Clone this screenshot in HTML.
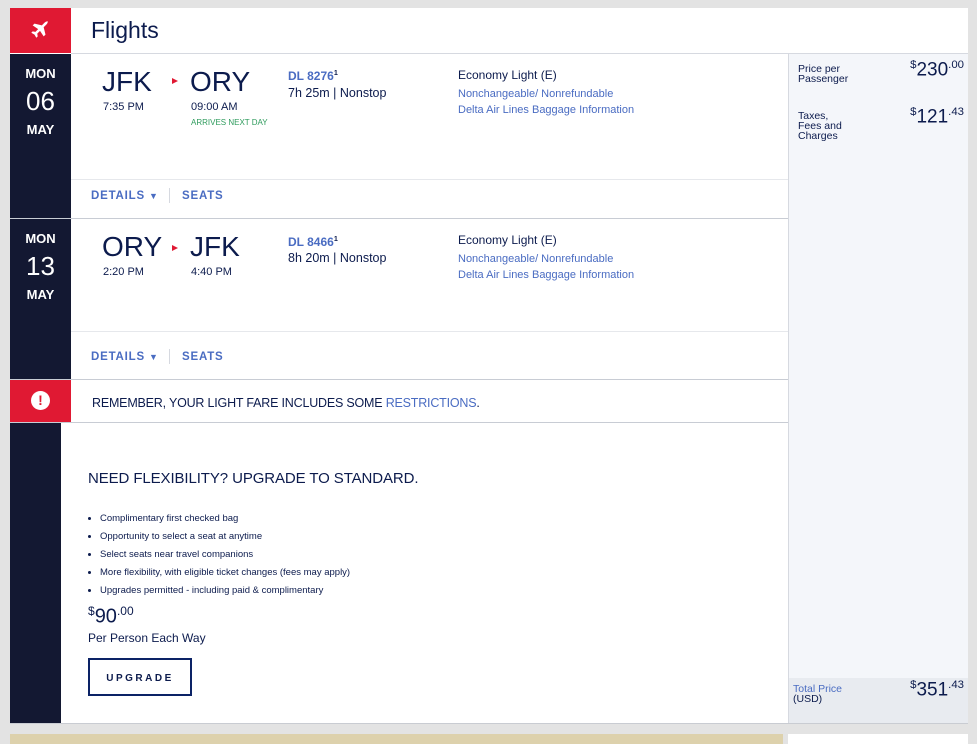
<!DOCTYPE html>
<html><head><meta charset="utf-8"><style>
*{margin:0;padding:0;box-sizing:border-box}
body{width:977px;height:741px;background:#e3e3e3;font-family:"Liberation Sans",sans-serif;color:#0c1b4d;position:relative;overflow:hidden}
.a{position:absolute}
.navy{background:#131832}
.red{background:#e01933}
.w{color:#fff;font-weight:bold;text-align:center}
.code{font-size:28px;letter-spacing:0px}
.t{font-size:11px}
.lnk{color:#4a6cc2}
.b{font-weight:bold}
.hr{height:1px;background:#d6d9e0}
.det{font-size:11.5px;font-weight:bold;color:#4a6cc2;letter-spacing:.8px;line-height:14px}
li{font-size:9.5px;margin-bottom:7px;margin-left:12px}
sup{font-size:60%}
</style></head><body>
<div class="a" style="left:10px;top:8px;width:958px;height:715px;background:#fff;box-shadow:0 1px 0 #c9ccd2"></div>
<div class="a red" style="left:10px;top:8px;width:61px;height:45px"></div>
<svg class="a" style="left:29px;top:19px" width="22" height="22" viewBox="0 0 24 24"><path fill="#fff" d="M21 3c-1-1-3 0-4 1l-3 3-8-2-2 2 6 4-3 3-3-.5-1.5 1.5 3.5 2 2 3.5 1.5-1.5-.5-3 3-3 4 6 2-2-2-8 3-3c1-1 2-3 1-4z"/></svg>
<div class="a" style="left:91px;top:17px;font-size:23px;color:#0c1b4d">Flights</div>
<div class="a hr" style="left:71px;top:53px;width:897px"></div>
<div class="a" style="left:788px;top:54px;width:180px;height:669px;background:#f4f6fa;border-left:1px solid #d6d9e0"></div>
<div class="a" style="left:788px;top:678px;width:180px;height:45px;background:#e8ebf0;border-left:1px solid #d6d9e0"></div>
<div class="a" style="left:798px;top:64px;font-size:10.5px;line-height:10px">Price per<br>Passenger</div>
<div class="a" style="right:13px;top:59px;font-size:19px"><sup>$</sup>230<sup>.00</sup></div>
<div class="a" style="left:798px;top:111px;font-size:10.5px;line-height:10px">Taxes,<br>Fees and<br>Charges</div>
<div class="a" style="right:13px;top:106px;font-size:19px"><sup>$</sup>121<sup>.43</sup></div>
<div class="a" style="left:793px;top:684px;font-size:10.5px;line-height:10px"><span class="lnk">Total Price</span><br>(USD)</div>
<div class="a" style="right:13px;top:679px;font-size:19px"><sup>$</sup>351<sup>.43</sup></div>
<div class="a navy" style="left:10px;top:54px;width:61px;height:325px"></div>
<div class="a w" style="left:10px;top:66px;width:61px;font-size:13px">MON</div>
<div class="a w" style="left:10px;top:86px;width:61px;font-size:26px;font-weight:normal">06</div>
<div class="a w" style="left:10px;top:122px;width:61px;font-size:13px">MAY</div>
<div class="a code" style="left:102px;top:66px">JFK</div>
<div class="a t" style="left:103px;top:101px">7:35 PM</div>
<div class="a" style="left:172px;top:78px;width:0;height:0;border-left:6px solid #e01933;border-top:3px solid transparent;border-bottom:3px solid transparent"></div>
<div class="a code" style="left:190px;top:66px">ORY</div>
<div class="a t" style="left:191px;top:101px">09:00 AM</div>
<div class="a" style="left:191px;top:118px;font-size:8px;color:#2e9b5c">ARRIVES NEXT DAY</div>
<div class="a b lnk" style="left:288px;top:68px;font-size:12px">DL 8276<sup style="color:#0c1b4d">1</sup></div>
<div class="a" style="left:288px;top:86px;font-size:12.5px">7h 25m | Nonstop</div>
<div class="a" style="left:458px;top:68px;font-size:12px">Economy Light (E)</div>
<div class="a lnk" style="left:458px;top:88px;font-size:11px">Nonchangeable/ Nonrefundable</div>
<div class="a lnk" style="left:458px;top:104px;font-size:11px">Delta Air Lines Baggage Information</div>
<div class="a hr" style="left:71px;top:179px;width:717px;background:#e6e8ec"></div>
<div class="a det" style="left:91px;top:189px">DETAILS <span style="font-size:9px">&#9660;</span></div>
<div class="a" style="left:169px;top:188px;width:1px;height:15px;background:#d6d9e0"></div>
<div class="a det" style="left:182px;top:189px">SEATS</div>
<div class="a hr" style="left:10px;top:218px;width:778px;background:#c8ccd4"></div>
<div class="a w" style="left:10px;top:231px;width:61px;font-size:13px">MON</div>
<div class="a w" style="left:10px;top:251px;width:61px;font-size:26px;font-weight:normal">13</div>
<div class="a w" style="left:10px;top:287px;width:61px;font-size:13px">MAY</div>
<div class="a code" style="left:102px;top:231px">ORY</div>
<div class="a t" style="left:103px;top:266px">2:20 PM</div>
<div class="a" style="left:172px;top:245px;width:0;height:0;border-left:6px solid #e01933;border-top:3px solid transparent;border-bottom:3px solid transparent"></div>
<div class="a code" style="left:190px;top:231px">JFK</div>
<div class="a t" style="left:191px;top:266px">4:40 PM</div>
<div class="a b lnk" style="left:288px;top:234px;font-size:12px">DL 8466<sup style="color:#0c1b4d">1</sup></div>
<div class="a" style="left:288px;top:251px;font-size:12.5px">8h 20m | Nonstop</div>
<div class="a" style="left:458px;top:233px;font-size:12px">Economy Light (E)</div>
<div class="a lnk" style="left:458px;top:253px;font-size:11px">Nonchangeable/ Nonrefundable</div>
<div class="a lnk" style="left:458px;top:269px;font-size:11px">Delta Air Lines Baggage Information</div>
<div class="a hr" style="left:71px;top:331px;width:717px;background:#e6e8ec"></div>
<div class="a det" style="left:91px;top:350px">DETAILS <span style="font-size:9px">&#9660;</span></div>
<div class="a" style="left:169px;top:349px;width:1px;height:15px;background:#d6d9e0"></div>
<div class="a det" style="left:182px;top:350px">SEATS</div>
<div class="a hr" style="left:10px;top:379px;width:778px;background:#c8ccd4"></div>
<div class="a red" style="left:10px;top:380px;width:61px;height:42px"></div>
<div class="a" style="left:31px;top:391px;width:19px;height:19px;border-radius:50%;background:#fff;color:#e01933;font-weight:bold;font-size:14px;text-align:center;line-height:19px">!</div>
<div class="a" style="left:92px;top:396px;font-size:12.5px;letter-spacing:-.2px">REMEMBER, YOUR LIGHT FARE INCLUDES SOME <span class="lnk">RESTRICTIONS</span>.</div>
<div class="a hr" style="left:10px;top:422px;width:778px;background:#c8ccd4"></div>
<div class="a navy" style="left:10px;top:423px;width:51px;height:300px"></div>
<div class="a" style="left:88px;top:470px;font-size:15px;letter-spacing:-.1px">NEED FLEXIBILITY? UPGRADE TO STANDARD.</div>
<ul class="a" style="left:88px;top:513px;list-style:disc;padding-left:0">
<li>Complimentary first checked bag</li>
<li>Opportunity to select a seat at anytime</li>
<li>Select seats near travel companions</li>
<li>More flexibility, with eligible ticket changes (fees may apply)</li>
<li>Upgrades permitted - including paid &amp; complimentary</li>
</ul>
<div class="a" style="left:88px;top:604px;font-size:20px"><sup>$</sup>90<sup>.00</sup></div>
<div class="a" style="left:88px;top:631px;font-size:12px">Per Person Each Way</div>
<div class="a" style="left:88px;top:658px;width:104px;height:38px;border:2px solid #0c2366;font-size:10px;font-weight:bold;letter-spacing:2.5px;text-align:center;line-height:37px">UPGRADE</div>
<div class="a" style="left:10px;top:734px;width:773px;height:10px;background:#ddd1ac"></div>
<div class="a" style="left:788px;top:734px;width:180px;height:10px;background:#fff"></div>
</body></html>
